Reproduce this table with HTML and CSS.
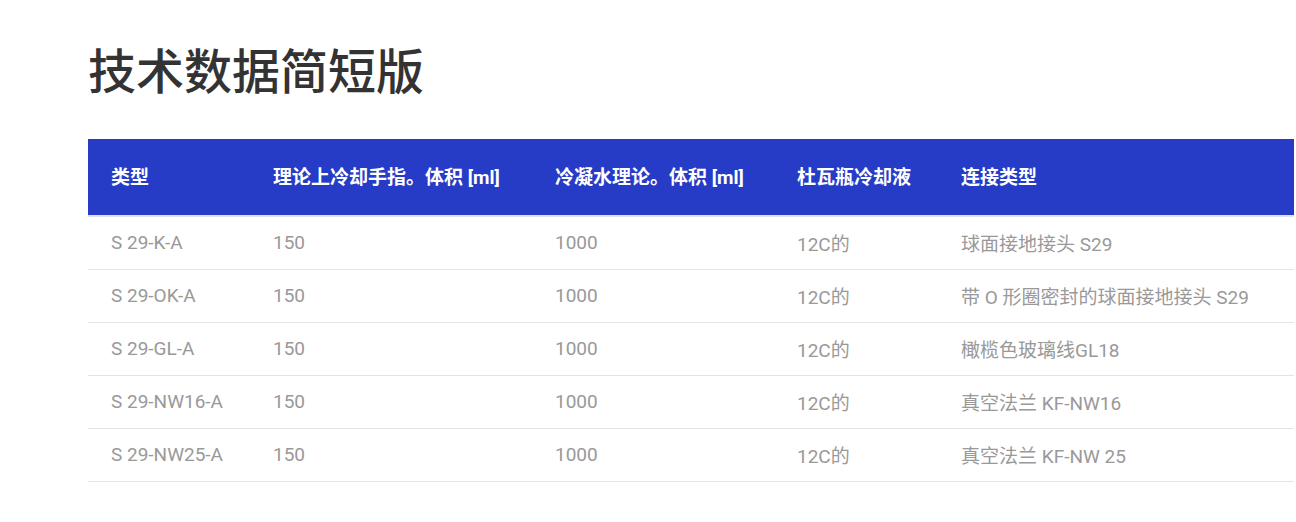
FILE: index.html
```html
<!DOCTYPE html>
<html lang="zh">
<head>
<meta charset="utf-8">
<link rel="stylesheet" href="styles.css">
</head>
<body>
<main class="page">
  <h1 class="title">技术数据简短版</h1>
  <table class="data">
    <colgroup>
      <col class="c1"><col class="c2"><col class="c3"><col class="c4"><col class="c5">
    </colgroup>
    <thead>
      <tr>
        <th>类型</th>
        <th>理论上冷却手指。体积 [ml]</th>
        <th>冷凝水理论。体积 [ml]</th>
        <th>杜瓦瓶冷却液</th>
        <th>连接类型</th>
      </tr>
    </thead>
    <tbody>
      <tr><td>S 29-K-A</td><td>150</td><td>1000</td><td>12C的</td><td>球面接地接头 S29</td></tr>
      <tr><td>S 29-OK-A</td><td>150</td><td>1000</td><td>12C的</td><td>带 O 形圈密封的球面接地接头 S29</td></tr>
      <tr><td>S 29-GL-A</td><td>150</td><td>1000</td><td>12C的</td><td>橄榄色玻璃线GL18</td></tr>
      <tr><td>S 29-NW16-A</td><td>150</td><td>1000</td><td>12C的</td><td>真空法兰 KF-NW16</td></tr>
      <tr><td>S 29-NW25-A</td><td>150</td><td>1000</td><td>12C的</td><td>真空法兰 KF-NW 25</td></tr>
    </tbody>
  </table>
</main>
</body>
</html>
```

FILE: styles.css
```css
html, body {
  margin: 0;
  padding: 0;
  background: #ffffff;
  overflow-x: hidden;
}
body {
  font-family: Roboto, "Noto Sans CJK SC", sans-serif;
}
.page {
  padding: 35px 0 0 88px;
}
.title {
  margin: 0 0 38px 0;
  font-family: "Noto Sans CJK SC", Roboto, sans-serif;
  font-size: 48px;
  font-weight: 500;
  line-height: 66px;
  color: #333333;
}
.data {
  width: 1206px;
  border-collapse: collapse;
  table-layout: fixed;
}
.c1 { width: 162px; }
.c2 { width: 282px; }
.c3 { width: 242px; }
.c4 { width: 164px; }
.data th {
  background: #263cc6;
  color: #ffffff;
  font-size: 19px;
  font-weight: 700;
  text-align: left;
  height: 73px;
  padding: 0 0 3px 23px;
  border-bottom: 2px solid #e2e2e2;
  white-space: nowrap;
}
.data td {
  color: #999999;
  font-size: 19px;
  height: 50px;
  padding: 0 0 2px 23px;
  border-bottom: 1px solid #e4e4e4;
  white-space: nowrap;
}
```
